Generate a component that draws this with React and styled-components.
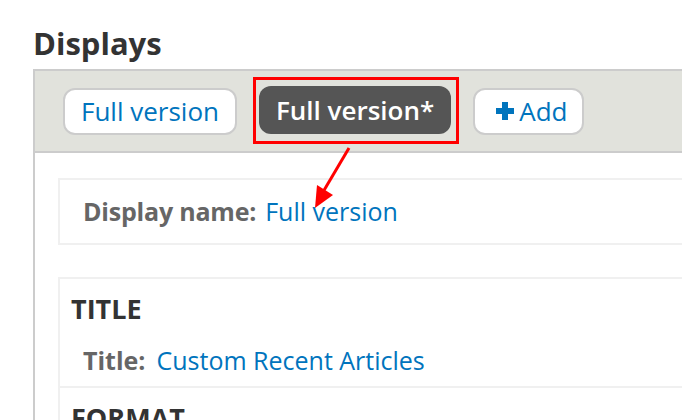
import React from "react";
import styled, { createGlobalStyle } from "styled-components";

const GlobalStyle = createGlobalStyle`
    html, body {
        margin: 0;
        padding: 0;
        background: #fff;
        overflow: hidden;
    }
    body {
        font-family: "Open Sans", "DejaVu Sans", sans-serif;
        color: #333;
    }
`;

const tabs = [
    { label: "Full version" },
    { label: "Full version*", active: true },
    { label: "Add", add: true },
];

const PlusIcon = () => (
    <svg width="18" height="18" viewBox="0 0 18 18" aria-hidden="true">
        <rect x="6" y="0" width="6" height="18" fill="#0074bd" />
        <rect x="0" y="6" width="18" height="6" fill="#0074bd" />
    </svg>
);

const App = () => {
    return (
        <>
            <GlobalStyle />
            <Page>
                <Heading>Displays</Heading>
                <Frame>
                    <Toolbar>
                        {tabs.map((tab) => (
                            <Tab key={tab.label} $active={tab.active} $add={tab.add}>
                                {tab.add && <PlusIcon />}
                                {tab.label}
                                {tab.active && <Highlight />}
                            </Tab>
                        ))}
                    </Toolbar>
                    <Content>
                        <NameBox>
                            <Label $tight>Display name:</Label>
                            <Link>Full version</Link>
                        </NameBox>
                        <Sections>
                            <Section>
                                <SectionTitle>Title</SectionTitle>
                                <Row>
                                    <Label>Title:</Label>
                                    <Link>Custom Recent Articles</Link>
                                </Row>
                            </Section>
                            <Section>
                                <SectionTitle>Format</SectionTitle>
                            </Section>
                        </Sections>
                    </Content>
                </Frame>
                {/* 빨간 화살표 주석 */}
                <Arrow width="682" height="420" viewBox="0 0 682 420">
                    <line x1="349" y1="148" x2="323" y2="192" stroke="#f00" strokeWidth="3" />
                    <polygon points="315,208 317,185 333,195" fill="#f00" />
                </Arrow>
            </Page>
        </>
    );
};

export default App;

const Page = styled.div`
    position: relative;
    width: 682px;
    height: 420px;
    padding: 24px 0 0 33px;
    box-sizing: border-box;
    overflow: hidden;
`;

const Heading = styled.h2`
    margin: 0 0 7px;
    font-size: 31px;
    line-height: 38px;
    font-weight: 700;
    color: #333;
`;

const Frame = styled.div`
    border-top: 2px solid #ccc;
    border-left: 2px solid #ccc;
    height: 400px;
`;

const Toolbar = styled.div`
    display: flex;
    align-items: center;
    gap: 22px;
    padding: 0 0 0 28px;
    height: 82px;
    box-sizing: border-box;
    background: #e1e2dc;
    border-bottom: 2px solid #ccc;
`;

const Tab = styled.div`
    position: relative;
    display: flex;
    align-items: center;
    gap: 5px;
    height: ${(p) => (p.$active ? "48px" : "47px")};
    box-sizing: border-box;
    padding: ${(p) => (p.$active ? "0 17px" : p.$add ? "0 14px 0 21px" : "0 16px")};
    margin-top: ${(p) => (p.$active ? "-2px" : "0")};
    border: ${(p) => (p.$active ? "none" : "2px solid #ccc")};
    border-radius: 12px;
    background: ${(p) => (p.$active ? "#555" : "#fff")};
    color: ${(p) => (p.$active ? "#fff" : "#0074bd")};
    font-size: 26px;
    font-weight: ${(p) => (p.$active ? 600 : 400)};
    white-space: nowrap;
`;

const Highlight = styled.span`
    position: absolute;
    top: -9px;
    left: -6px;
    right: -8px;
    bottom: -10px;
    border: 3px solid #f00;
    pointer-events: none;
`;

const Content = styled.div`
    padding: 25px 0 0 23px;
`;

const NameBox = styled.div`
    display: flex;
    gap: 9px;
    padding: 16px 24px 17px 23px;
    line-height: 30px;
    font-size: 25px;
    border: 2px solid #f0f0f0;
    border-right: none;
`;

const Label = styled.span`
    font-weight: 700;
    color: #666;
    letter-spacing: ${(p) => (p.$tight ? "-0.2px" : "0")};
`;

const Link = styled.span`
    color: #0074bd;
`;

const Sections = styled.div`
    margin-top: 32px;
    border-top: 2px solid #f0f0f0;
    border-left: 2px solid #f0f0f0;
`;

const Section = styled.div`
    padding: 14px 0 11px 11px;
    border-bottom: 2px solid #f0f0f0;
`;

const SectionTitle = styled.div`
    font-size: 27px;
    line-height: 32px;
    font-weight: 700;
    text-transform: uppercase;
    color: #333;
`;

const Row = styled.div`
    display: flex;
    gap: 11px;
    margin-top: 20px;
    padding-left: 12px;
    font-size: 25px;
    line-height: 30px;
`;

const Arrow = styled.svg`
    position: absolute;
    top: 0;
    left: 0;
    pointer-events: none;
`;
